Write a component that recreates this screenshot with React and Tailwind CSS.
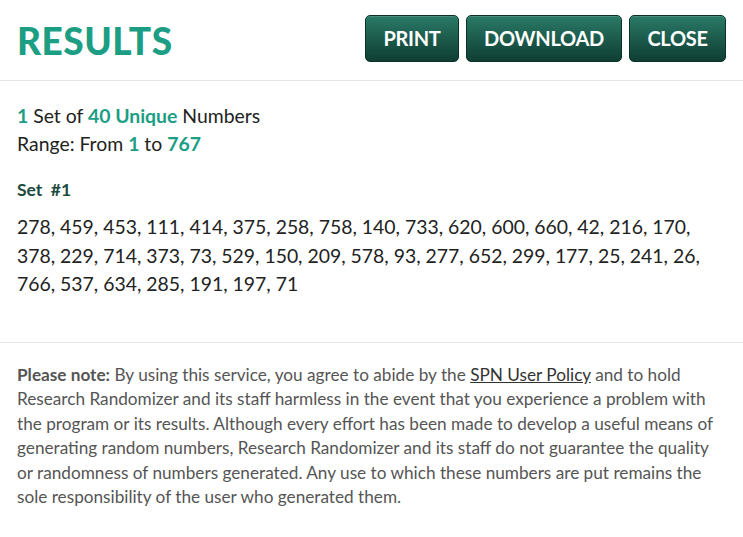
export default function App() {
  const nums = "278, 459, 453, 111, 414, 375, 258, 758, 140, 733, 620, 600, 660, 42, 216, 170, 378, 229, 714, 373, 73, 529, 150, 209, 578, 93, 277, 652, 299, 177, 25, 241, 26, 766, 537, 634, 285, 191, 197, 71";
  const btn = "h-[47px] px-[16px] rounded-[5px] border border-[#0b3129] bg-gradient-to-b from-[#2a7a67] to-[#0f3e33] text-white text-[20px] font-bold tracking-[-0.3px] flex items-center justify-center shadow-[inset_0_1px_0_rgba(255,255,255,0.15)]";
  return (
    <div className="w-[743px] h-[537px] bg-white font-['Lato',sans-serif] overflow-hidden">
      <div className="flex items-center justify-between pl-[17px] pr-[17px] h-[81px] border-b border-[#e6e6e6]">
        <h1 className="text-[37px] font-black text-[#1b9e84] tracking-[0.5px] leading-none mt-[1px]">RESULTS</h1>
        <div className="flex gap-[7px] mt-[-4px]">
          <button className={btn + " w-[94px]"}>PRINT</button>
          <button className={btn + " w-[156px]"}>DOWNLOAD</button>
          <button className={btn + " w-[97px]"}>CLOSE</button>
        </div>
      </div>
      <div className="px-[17px] pt-[21px] pb-[43px] border-b border-[#e6e6e6] text-[19.4px] text-[#222] leading-[28px]">
        <p><b className="text-[#1b9e84]">1</b> Set of <b className="text-[#1b9e84]">40 Unique</b> Numbers</p>
        <p>Range: From <b className="text-[#1b9e84]">1</b> to <b className="text-[#1b9e84]">767</b></p>
        <p className="mt-[20px] text-[17.5px] font-bold text-[#1d4a3e] leading-[24px]">Set&nbsp; #1</p>
        <p className="mt-[11px] leading-[28.5px]">{nums}</p>
      </div>
      <div className="px-[17px] pt-[20px] text-[17.2px] leading-[24.6px] text-[#555]">
        <p><b>Please note:</b> By using this service, you agree to abide by the <a className="underline text-[#333]">SPN User Policy</a> and to hold Research Randomizer and its staff harmless in the event that you experience a problem with the program or its results. Although every effort has been made to develop a useful means of generating random numbers, Research Randomizer and its staff do not guarantee the quality or randomness of numbers generated. Any use to which these numbers are put remains the sole responsibility of the user who generated them.</p>
      </div>
    </div>
  );
}
